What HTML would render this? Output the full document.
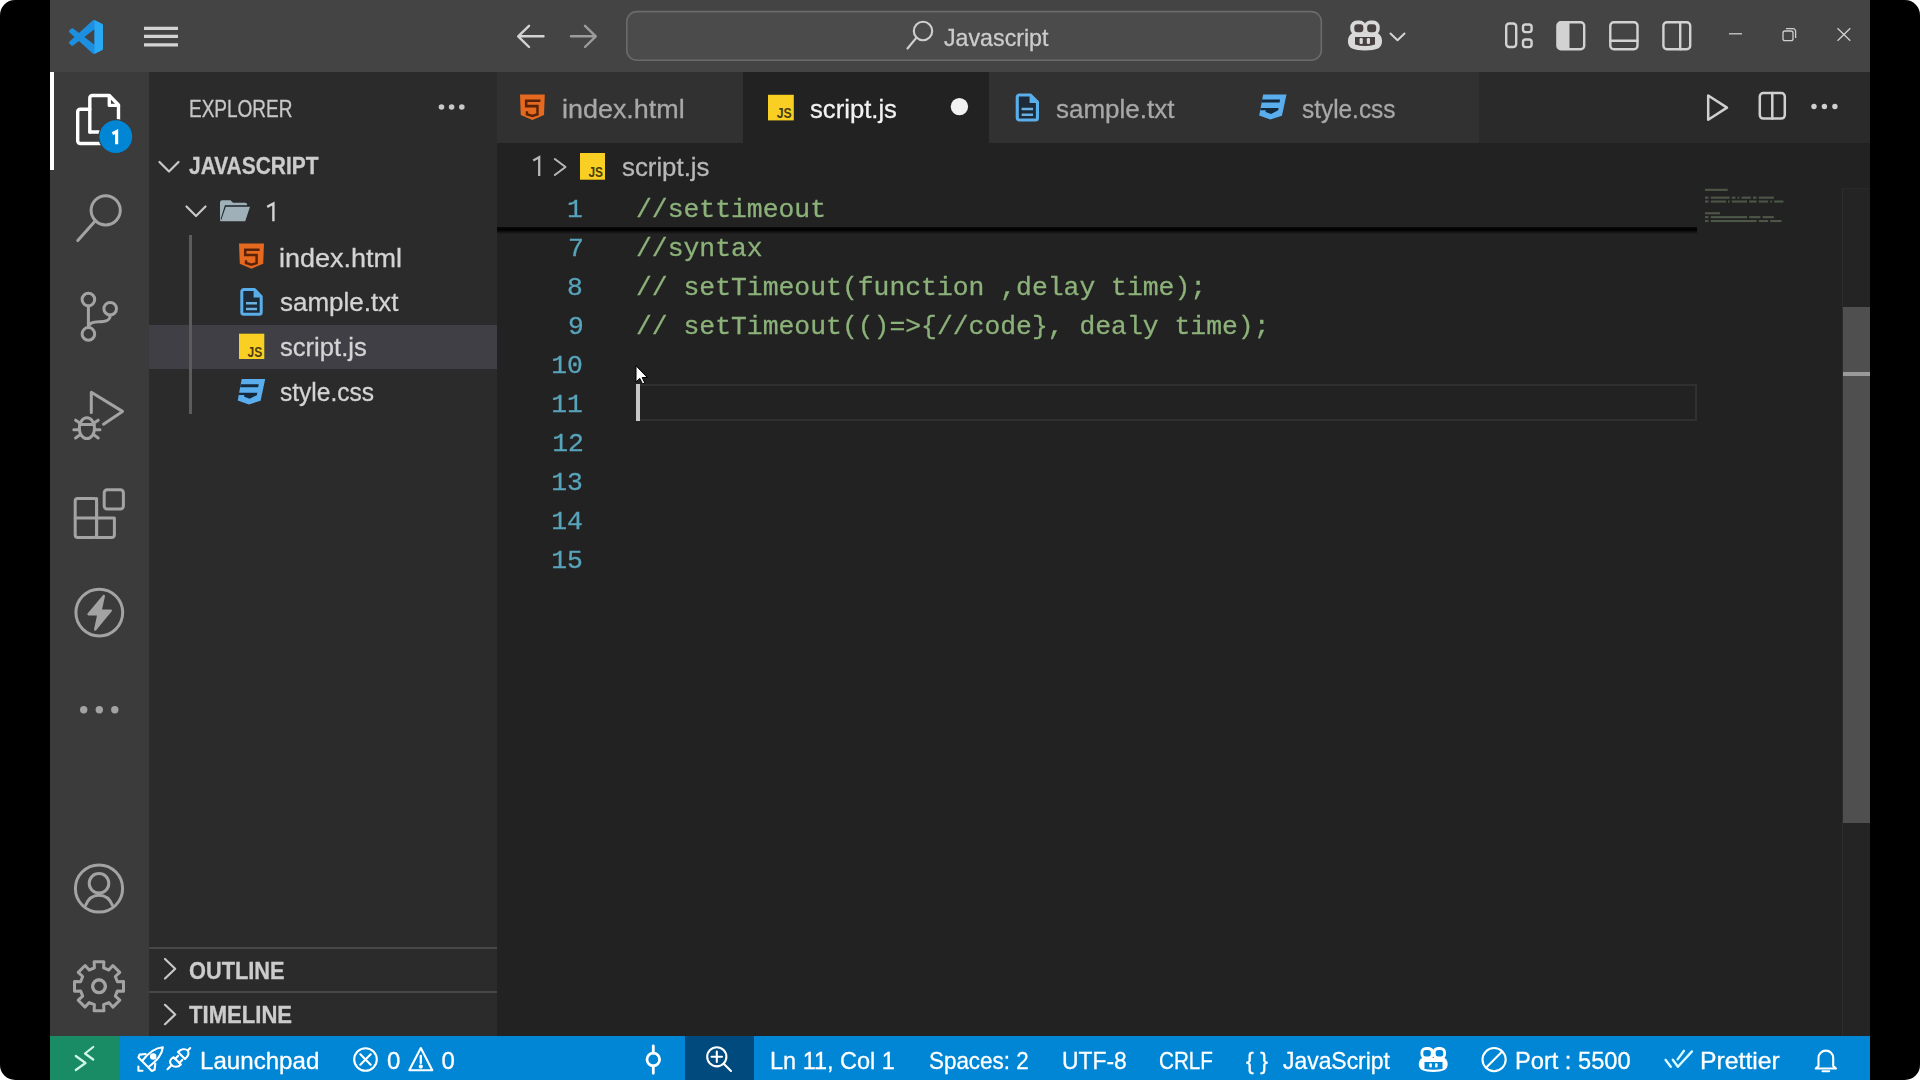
<!DOCTYPE html>
<html><head><meta charset="utf-8"><style>
html,body{margin:0;padding:0;width:1920px;height:1080px;overflow:hidden;background:#fff}
.frame{position:absolute;left:0;top:0;width:1920px;height:1080px;background:#000;border-radius:15px}
.r{position:absolute}
.t{position:absolute;white-space:pre;transform-origin:0 0;-webkit-text-stroke:0.3px currentColor;-webkit-font-smoothing:antialiased}
svg{position:absolute;left:0;top:0}
</style></head><body>
<div class="frame"></div>
<div class="r" style="left:50px;top:0px;width:1820px;height:72px;background:#444444;"></div>
<div class="r" style="left:50px;top:72px;width:99px;height:964px;background:#3b3b3b;"></div>
<div class="r" style="left:149px;top:72px;width:348px;height:964px;background:#2b2b2b;"></div>
<div class="r" style="left:497px;top:72px;width:1373px;height:71px;background:#2a2a2a;"></div>
<div class="r" style="left:497px;top:143px;width:1373px;height:893px;background:#222222;"></div>
<div class="r" style="left:50px;top:1036px;width:1820px;height:44px;background:#0086d5;"></div>
<div class="r" style="left:50px;top:1036px;width:70px;height:44px;background:#1a8c65;"></div>
<div class="r" style="left:684.5px;top:1036px;width:69.0px;height:44px;background:#004a7d;"></div>
<div class="r" style="left:497px;top:72px;width:246px;height:71px;background:#313131;"></div>
<div class="r" style="left:743px;top:72px;width:246px;height:71px;background:#222222;"></div>
<div class="r" style="left:989px;top:72px;width:244px;height:71px;background:#313131;"></div>
<div class="r" style="left:1233px;top:72px;width:246px;height:71px;background:#313131;"></div>
<div class="r" style="left:50px;top:72px;width:4px;height:98px;background:#ffffff;"></div>
<div class="r" style="left:149px;top:324.5px;width:348px;height:44.5px;background:#3f3f45;"></div>
<div class="r" style="left:189.3px;top:234.5px;width:2.5px;height:179.5px;background:#5c5c5c;"></div>
<div class="r" style="left:149px;top:946.5px;width:348px;height:2.0px;background:#474747;"></div>
<div class="r" style="left:149px;top:991px;width:348px;height:2px;background:#474747;"></div>
<div class="r" style="left:636px;top:384px;width:1061px;height:37px;background:transparent;box-sizing:border-box;border:2px solid #303030;"></div>
<div class="r" style="left:635.5px;top:384px;width:4.0px;height:37px;background:#c8c8c8;"></div>
<div class="r" style="left:497px;top:226.5px;width:1200px;height:7.5px;background:transparent;background:linear-gradient(#0a0a0a,#000 35%,rgba(0,0,0,0.5) 70%,rgba(0,0,0,0))"></div>
<div class="r" style="left:1842px;top:188px;width:28px;height:848px;background:#242424;box-sizing:border-box;border-left:1px solid #2d2d2d;border-top:1px solid #282828"></div>
<div class="r" style="left:1843px;top:306.5px;width:27px;height:516.0px;background:#4f4f4f;"></div>
<div class="r" style="left:1843px;top:372px;width:27px;height:4px;background:#9a9a9a;"></div>
<svg width="1920" height="1080" viewBox="0 0 1920 1080" fill="none" stroke-linecap="round" stroke-linejoin="round">
<!-- VS Code logo -->
<g transform="translate(69,20) scale(0.34)">
<path fill="#1c8fe0" d="M96.46 10.8L75.86.87a6.23 6.23 0 0 0-7.1 1.2L29.35 38.04 12.19 25.01a4.16 4.16 0 0 0-5.32.24l-5.5 5a4.17 4.17 0 0 0 0 6.16L16.26 50 1.37 63.58a4.17 4.17 0 0 0 0 6.16l5.5 5a4.16 4.16 0 0 0 5.32.24l17.16-13.03 39.41 35.96a6.22 6.22 0 0 0 7.1 1.2l20.6-9.92A6.25 6.25 0 0 0 100 83.58V16.42a6.25 6.25 0 0 0-3.54-5.63zM75 72.7L45.1 50 75 27.3z"/>
<path fill="#2aa8f2" d="M75 27.3V72.7 L75 99 l21.46-10.3A6.25 6.25 0 0 0 100 83.58V16.42a6.25 6.25 0 0 0-3.54-5.63L75.86.87 75 1z"/>
</g>
<!-- hamburger -->
<g stroke="#d4d4d4" stroke-width="3.2" stroke-linecap="butt">
<path d="M144 28.3H178M144 36.4H178M144 44.8H178"/>
</g>
<!-- nav arrows -->
<path d="M543.5 36.3H518.5M529 25.8L518.2 36.3L529 47" stroke="#d4d4d4" stroke-width="2.4"/>
<path d="M571 36.3H595.5M585 25.8L595.8 36.3L585 47" stroke="#9c9c9c" stroke-width="2.4"/>
<!-- search box -->
<rect x="626.8" y="11.6" width="694.5" height="48.6" rx="10" fill="#4b4b4b" stroke="#6b6b6b" stroke-width="1.6"/>
<circle cx="923" cy="31" r="9.2" stroke="#cfcfcf" stroke-width="2.1"/>
<path d="M916.5 37.6L907.5 48.5" stroke="#cfcfcf" stroke-width="2.2"/>
<!-- copilot -->
<g fill="#d9d9d9">
<path d="M1352.5 33 C1346.5 36 1346.5 46 1352 48.5 C1357 51 1373 51 1378 48.5 C1383.5 46 1383.5 36 1377.5 33 Z"/>
<rect x="1350.3" y="20.6" width="15.8" height="15" rx="6.5"/>
<rect x="1363.9" y="20.6" width="15.8" height="15" rx="6.5"/>
</g>
<g fill="#474040">
<rect x="1354.3" y="24.3" width="9" height="8" rx="3"/>
<rect x="1367.2" y="24.3" width="9" height="8" rx="3"/>
<path d="M1355 37 H1375 V44.5 Q1365 47.5 1355 44.5 Z"/>
</g>
<g fill="#d9d9d9"><rect x="1359.6" y="38" width="3.2" height="6" rx="1.3"/><rect x="1366.8" y="38" width="3.2" height="6" rx="1.3"/></g>
<path d="M1390.5 33.5L1397.5 40.2L1404.5 33.5" stroke="#d4d4d4" stroke-width="2"/>
<!-- layout icons -->
<g stroke="#d2d2d2" stroke-width="2.4">
<rect x="1506.2" y="23.5" width="10" height="23.5" rx="3"/>
<rect x="1523" y="24.5" width="8.6" height="7.6" rx="2.5"/>
<rect x="1523" y="39.5" width="8.6" height="7.6" rx="2.5"/>
<rect x="1557.4" y="22.3" width="26.8" height="26.9" rx="3.5"/>
<rect x="1610.3" y="22.3" width="27.2" height="26.9" rx="3.5"/>
<path d="M1610.3 40.7H1637.5"/>
<rect x="1663.4" y="22.3" width="26.8" height="26.9" rx="3.5"/>
<path d="M1680.2 22.3V49.2"/>
</g>
<path d="M1561 22.3 H1569.5 V49.2 H1561 A3.5 3.5 0 0 1 1557.4 45.7 V25.8 A3.5 3.5 0 0 1 1561 22.3Z" fill="#d2d2d2"/>
<!-- window controls -->
<g stroke="#cfcfcf" stroke-width="1.3" stroke-linecap="butt">
<path d="M1729 33.8H1742"/>
<rect x="1783" y="31" width="10" height="9.7" rx="2"/>
<path d="M1786 28.6H1793A2.6 2.6 0 0 1 1795.6 31.2V38"/>
<path d="M1837.5 28.3L1850.3 40.8M1850.3 28.3L1837.5 40.8"/>
</g>
<!-- activity bar -->
<g stroke="#ffffff" stroke-width="3.4">
<path d="M89.8 132 V98 A2.5 2.5 0 0 1 92.3 95.5 H109.3 L118.5 105 V120"/>
<path d="M109.3 95.8 V105.4 H118.5"/>
<path d="M89.8 109.3 H80.2 A2.5 2.5 0 0 0 77.7 111.8 V141 A2.5 2.5 0 0 0 80.2 143.5 H101"/>
<path d="M89.8 132 H100"/>
</g>
<circle cx="115.8" cy="136.6" r="17.5" fill="#3b3b3b"/><circle cx="115.8" cy="136.6" r="16.4" fill="#0086d5"/>
<path d="M112.4 133.6 L116.6 131.6 V144.2" stroke="#ffffff" stroke-width="3.2" stroke-linecap="butt" stroke-linejoin="miter"/>
<g stroke="#a3a3a3" stroke-width="3">
<circle cx="105.7" cy="210.3" r="14.6"/>
<path d="M95.4 220.7 L77.8 240.6"/>
<circle cx="88.4" cy="299.6" r="6.3"/>
<circle cx="88.4" cy="333.9" r="6.3"/>
<circle cx="110.2" cy="308.7" r="6.3"/>
<path d="M88.4 305.9 V327.6"/>
<path d="M110.2 315 C110.2 320.5 106 321.8 99 321.8 C93 321.8 89 323.5 88.4 327"/>
<path d="M91.3 412.5 V392.2 L122.5 411.4 L103.5 424.2"/>
<ellipse cx="86.9" cy="428.2" rx="7.6" ry="10.4"/>
<path d="M79.6 424.4 H94.2 M75.6 420.2 L80.2 423.2 M73.8 429.8 H79.3 M75.6 438 L80.2 434.6 M98.2 420.2 L93.6 423.2 M100 429.8 H94.5 M98.2 438 L93.6 434.6"/>
<rect x="75.2" y="498.4" width="21.4" height="39" rx="2.5"/>
<path d="M75.2 518 H114.4 V534.9 A2.5 2.5 0 0 1 111.9 537.4 H96.6 V498.4"/>
<rect x="104.2" y="489.8" width="19.2" height="19.2" rx="3"/>
<circle cx="99.3" cy="612.6" r="23.4"/>
<circle cx="99" cy="888.5" r="23.6"/>
<circle cx="99" cy="883.3" r="9.8"/>
<path d="M85.5 905.5 C88.5 898 93.5 895.3 99 895.3 C104.5 895.3 109.5 898 112.5 905.5"/>
</g>
<path fill="#a3a3a3" stroke="#a3a3a3" stroke-width="2.4" stroke-linejoin="round" d="M103.8 596 L88.5 614.2 H98.5 L95.2 629.5 L110.8 610.6 H100.6 Z"/>
<g fill="#a3a3a3"><circle cx="83.7" cy="709.8" r="3.7"/><circle cx="99.3" cy="709.8" r="3.7"/><circle cx="114.8" cy="709.8" r="3.7"/></g>
<g transform="translate(99,986.3)" stroke="#a3a3a3" stroke-width="3">
<path id="gear" d=""/>
<circle r="6.5"/>
</g>
<!-- sidebar -->
<g fill="#c8c8c8"><circle cx="441.5" cy="107" r="2.8"/><circle cx="451.6" cy="107" r="2.8"/><circle cx="461.8" cy="107" r="2.8"/></g>
<g stroke="#c8c8c8" stroke-width="2.2">
<path d="M159.5 162 L169 171.5 L178.5 162"/>
<path d="M186.5 206.5 L196 216 L205.5 206.5"/>
<path d="M165 959 L175.2 968.7 L165 978.5"/>
<path d="M165 1004.8 L175.2 1014.5 L165 1024.2"/>
</g>
<path fill="#9fb0b9" d="M220 221 V202.5 Q220 200.2 222.3 200.2 H230.5 L233 202.8 H245 Q247.2 202.8 247.2 205 V206.2 H225.5 L221.2 221 Z"/>
<path fill="#1e2629" d="M224.9 205.2 H249.8 L249.4 206.9 H226 L221.9 220.5 L220.6 219.2 Z"/>
<path fill="#9fb0b9" d="M225.8 206.8 H250 L245.2 221.3 H220.8 Z"/>
<path d="M533.2 160.6 L539.2 157.3 V176" stroke="#b8b8b8" stroke-width="2.3" stroke-linecap="butt" stroke-linejoin="miter"/>
<path d="M267.2 206.9 L273.4 203.5 V221.3" stroke="#d4d4d4" stroke-width="2.4" stroke-linecap="butt" stroke-linejoin="miter"/>
<!-- editor actions -->
<g stroke="#d0d0d0" stroke-width="2.5">
<path d="M1708.2 95.5 V119.8 L1727 107.6 Z"/>
<rect x="1759.8" y="93" width="25" height="25.6" rx="3.5"/>
<path d="M1772.3 93 V118.6"/>
<path d="M554.8 159 L565.5 167 L554.8 175" stroke="#b8b8b8" stroke-width="2"/>
</g>
<g fill="#d0d0d0"><circle cx="1814" cy="106.5" r="2.7"/><circle cx="1824.4" cy="106.5" r="2.7"/><circle cx="1834.9" cy="106.5" r="2.7"/></g>
<circle cx="959.4" cy="106.6" r="8.7" fill="#f2f2f2"/>
<g transform="translate(520,94) scale(0.9920,1.0196)">
<path fill="#e56a1f" d="M0 0.5 H25 L24.2 20.5 L12.5 25.5 L0.8 20.5 Z"/>
<path d="M20.6 6.6 H6.2 V11.9 H17.6 V19.9 L12.5 21.5 L7 19.9 V17" stroke="#5a2309" stroke-width="2.5" fill="none" stroke-linejoin="miter" stroke-linecap="butt"/>
</g>
<g transform="translate(768,94.8) scale(1.0198,1.0119)">
<rect width="25.3" height="25.3" fill="#f9cf24"/>
<text x="23.2" y="23" text-anchor="end" font-family="Liberation Sans" font-weight="700" font-size="14" fill="#4a3d0c" textLength="14.7" lengthAdjust="spacingAndGlyphs">JS</text>
</g>
<g transform="translate(1015.7,93.5) scale(1.0402,1.0108)">
<path d="M1.5 3.5 A2 2 0 0 1 3.5 1.5 H14.2 L20.9 8.5 V24.2 A2 2 0 0 1 18.9 26.2 H3.5 A2 2 0 0 1 1.5 24.2 Z" stroke="#5aaeea" stroke-width="3" fill="#1d2a37"/>
<path d="M13.3 2 V9.5 H20.5 Z" fill="#5aaeea"/>
<path d="M5.7 15.3 H16.7 M5.7 21 H16.7" stroke="#6ab0e0" stroke-width="2.6" fill="none" stroke-linecap="butt"/>
</g>
<g transform="translate(1258.8,94) scale(0.9929,0.9848)">
<path fill="#5aaeed" d="M4.4 0.4 H27.9 L23.3 22.2 L11.6 25.8 L0.4 21.8 Z"/>
<path fill="#15293c" d="M3.4 5.7 H21.4 L20.9 8.7 H2.85 Z"/>
<path fill="#15293c" d="M1.84 14.1 H20 L19.5 16.6 L12.4 20.2 L7 18.2 L6.8 16.4 H1.42 Z"/>
</g>
<g transform="translate(580,153) scale(0.9881,1.0553)">
<rect width="25.3" height="25.3" fill="#f9cf24"/>
<text x="23.2" y="23" text-anchor="end" font-family="Liberation Sans" font-weight="700" font-size="14" fill="#4a3d0c" textLength="14.7" lengthAdjust="spacingAndGlyphs">JS</text>
</g>
<g transform="translate(239,243) scale(1.0000,1.0078)">
<path fill="#e56a1f" d="M0 0.5 H25 L24.2 20.5 L12.5 25.5 L0.8 20.5 Z"/>
<path d="M20.6 6.6 H6.2 V11.9 H17.6 V19.9 L12.5 21.5 L7 19.9 V17" stroke="#5a2309" stroke-width="2.5" fill="none" stroke-linejoin="miter" stroke-linecap="butt"/>
</g>
<g transform="translate(240.3,288) scale(1.0000,1.0000)">
<path d="M1.5 3.5 A2 2 0 0 1 3.5 1.5 H14.2 L20.9 8.5 V24.2 A2 2 0 0 1 18.9 26.2 H3.5 A2 2 0 0 1 1.5 24.2 Z" stroke="#5aaeea" stroke-width="3" fill="#1d2a37"/>
<path d="M13.3 2 V9.5 H20.5 Z" fill="#5aaeea"/>
<path d="M5.7 15.3 H16.7 M5.7 21 H16.7" stroke="#6ab0e0" stroke-width="2.6" fill="none" stroke-linecap="butt"/>
</g>
<g transform="translate(239,333.7) scale(1.0000,1.0000)">
<rect width="25.3" height="25.3" fill="#f9cf24"/>
<text x="23.2" y="23" text-anchor="end" font-family="Liberation Sans" font-weight="700" font-size="14" fill="#4a3d0c" textLength="14.7" lengthAdjust="spacingAndGlyphs">JS</text>
</g>
<g transform="translate(237.3,378.6) scale(1.0000,1.0000)">
<path fill="#5aaeed" d="M4.4 0.4 H27.9 L23.3 22.2 L11.6 25.8 L0.4 21.8 Z"/>
<path fill="#15293c" d="M3.4 5.7 H21.4 L20.9 8.7 H2.85 Z"/>
<path fill="#15293c" d="M1.84 14.1 H20 L19.5 16.6 L12.4 20.2 L7 18.2 L6.8 16.4 H1.42 Z"/>
</g>
<path d="M94.4 967.9 L94.1 961.8 L103.9 961.8 L103.6 967.9 L108.8 970.0 L112.9 965.5 L119.8 972.4 L115.3 976.5 L117.4 981.7 L123.5 981.4 L123.5 991.2 L117.4 990.9 L115.3 996.1 L119.8 1000.2 L112.9 1007.1 L108.8 1002.6 L103.6 1004.7 L103.9 1010.8 L94.1 1010.8 L94.4 1004.7 L89.2 1002.6 L85.1 1007.1 L78.2 1000.2 L82.7 996.1 L80.6 990.9 L74.5 991.2 L74.5 981.4 L80.6 981.7 L82.7 976.5 L78.2 972.4 L85.1 965.5 L89.2 970.0Z" stroke="#a3a3a3" stroke-width="3" fill="none" stroke-linejoin="round"/><circle cx="99" cy="986.3" r="6.3" stroke="#a3a3a3" stroke-width="3" fill="none"/>
<g stroke="#ffffff" stroke-width="2.1" fill="none" stroke-linecap="round" stroke-linejoin="round">
<path d="M75.8 1056 L85.5 1063 L75.8 1070" stroke="#d2f7ea" stroke-width="2.2"/>
<path d="M93.2 1047 L85 1053.5 L93.2 1059.5" stroke="#d2f7ea" stroke-width="2.2"/>
<path d="M162.8 1047.3 C155 1047.8 149 1052 142 1061.1 L148.2 1067.3 C157 1060.3 162 1055 162.8 1047.3 Z"/>
<path d="M142 1061.1 L138.4 1057.4 L139.6 1054.6 L145.6 1054 M148.2 1067.3 L151.8 1070.9 L154.6 1069.8 L155.3 1063.7"/>
<path d="M138.4 1066.6 V1070.7 H142.5"/>
<circle cx="153.2" cy="1056.4" r="2.2" fill="#ffffff"/>
<path d="M173.6 1057.2 L180.9 1064.5 C178 1067.5 174 1067.5 171.5 1065 C169 1062.5 169.5 1059.5 173.6 1057.2 Z"/>
<path d="M171 1065.8 L167.5 1069.3 M175.2 1058.8 L178.2 1055.8 M179.3 1062.9 L182.3 1059.9"/>
<path d="M178 1052 L185 1059 C188 1056.5 189.5 1053.5 187.8 1050.5 C185 1048.3 181 1049 178 1052 Z"/>
<path d="M187.8 1050.5 L190.2 1048"/>
<circle cx="365.5" cy="1059.5" r="11.3"/>
<path d="M360.3 1054.3 L370.7 1064.7 M370.7 1054.3 L360.3 1064.7"/>
<path d="M420.8 1048 L432.3 1070.3 H409.3 Z"/>
<path d="M420.8 1056 V1063" stroke-width="2.3"/>
<circle cx="420.8" cy="1066.6" r="1.1" fill="#ffffff"/>
<circle cx="653.3" cy="1059.5" r="6.3" stroke-width="2.8"/>
<path d="M653.3 1046 V1053 M653.3 1066 V1073.3" stroke-width="2.8"/>
<circle cx="716.8" cy="1056.8" r="9.6"/>
<path d="M723.7 1063.7 L731 1071 M716.8 1051.5 V1062 M711.5 1056.8 H722" />
<circle cx="1494.1" cy="1059.6" r="11.6"/>
<path d="M1486 1067.7 L1502.2 1051.5"/>
<path d="M1665.5 1059.8 L1670.8 1066.8 M1672.8 1059.8 L1677.9 1066.8 L1692 1051.4 M1677.6 1059.4 L1684 1050.8" stroke="#d8fbff" stroke-width="2.3"/>
<path d="M1818.5 1066 V1058 A7.3 7.3 0 0 1 1833.2 1058 V1066 L1836 1068.5 H1815.7 Z"/>
<path d="M1822.5 1071.3 H1829.2"/>
</g>
<g fill="#ffffff">
<path d="M1422 1058 C1417.5 1061 1418 1068 1422 1070 C1427 1072.5 1439.5 1072.5 1444.5 1070 C1448.5 1068 1449 1061 1444.5 1058 Z"/>
<rect x="1420.5" y="1047" width="13.5" height="12.5" rx="5.5"/>
<rect x="1432.5" y="1047" width="13.5" height="12.5" rx="5.5"/>
</g>
<g fill="#0086d5">
<rect x="1423.3" y="1050" width="7.5" height="6.5" rx="2.5"/>
<rect x="1435.7" y="1050" width="7.5" height="6.5" rx="2.5"/>
<path d="M1424.5 1062 H1442.5 V1069 Q1433.5 1070.5 1424.5 1069 Z"/>
</g>
<g fill="#ffffff"><rect x="1429.3" y="1063.3" width="2.6" height="4.3" rx="1"/><rect x="1435" y="1063.3" width="2.6" height="4.3" rx="1"/></g>

<path d="M636 366 V382 L639.8 378.4 L642.5 384 L644.8 383 L642.2 377.5 L647 377.5 Z" fill="#ffffff" stroke="#000000" stroke-width="1"/>
<g fill="#8aa07c" opacity="0.42">
<rect x="1705.0" y="188.8" width="22.7" height="2.1"/>
<rect x="1705.0" y="196.6" width="3.5" height="2.1"/>
<rect x="1710.8" y="196.6" width="18.9" height="2.1"/>
<rect x="1731.9" y="196.6" width="3.5" height="2.1"/>
<rect x="1737.6" y="196.6" width="1.6" height="2.1"/>
<rect x="1741.5" y="196.6" width="9.3" height="2.1"/>
<rect x="1753.0" y="196.6" width="3.5" height="2.1"/>
<rect x="1758.8" y="196.6" width="15.1" height="2.1"/>
<rect x="1705.0" y="200.5" width="3.5" height="2.1"/>
<rect x="1710.8" y="200.5" width="15.1" height="2.1"/>
<rect x="1728.0" y="200.5" width="1.6" height="2.1"/>
<rect x="1731.9" y="200.5" width="15.1" height="2.1"/>
<rect x="1749.2" y="200.5" width="7.4" height="2.1"/>
<rect x="1758.8" y="200.5" width="9.3" height="2.1"/>
<rect x="1770.3" y="200.5" width="1.6" height="2.1"/>
<rect x="1774.1" y="200.5" width="9.3" height="2.1"/>
<rect x="1705.0" y="212.2" width="15.1" height="2.1"/>
<rect x="1705.0" y="216.1" width="3.5" height="2.1"/>
<rect x="1710.8" y="216.1" width="36.2" height="2.1"/>
<rect x="1749.2" y="216.1" width="11.2" height="2.1"/>
<rect x="1762.6" y="216.1" width="11.2" height="2.1"/>
<rect x="1705.0" y="220.0" width="3.5" height="2.1"/>
<rect x="1710.8" y="220.0" width="45.8" height="2.1"/>
<rect x="1758.8" y="220.0" width="9.3" height="2.1"/>
<rect x="1770.3" y="220.0" width="11.2" height="2.1"/>
</g>
</svg>

<div style="position:absolute;left:0;top:0;width:1920px;height:1080px;will-change:transform">
<span class="t" style="left:944.2px;top:25.5px;font:400 24px/24px 'Liberation Sans',sans-serif;color:#cccccc;transform:scaleX(0.9671);">Javascript</span>
<span class="t" style="left:562.0px;top:96.1px;font:400 26.5px/26.5px 'Liberation Sans',sans-serif;color:#a8a8a8;transform:scaleX(1.0161);">index.html</span>
<span class="t" style="left:809.7px;top:95.8px;font:400 26.5px/26.5px 'Liberation Sans',sans-serif;color:#f2f2f2;transform:scaleX(0.9680);">script.js</span>
<span class="t" style="left:1055.7px;top:95.8px;font:400 26.5px/26.5px 'Liberation Sans',sans-serif;color:#a8a8a8;transform:scaleX(0.9810);">sample.txt</span>
<span class="t" style="left:1301.8px;top:95.8px;font:400 26.5px/26.5px 'Liberation Sans',sans-serif;color:#a8a8a8;transform:scaleX(0.9196);">style.css</span>
<span class="t" style="left:621.7px;top:153.6px;font:400 26.5px/26.5px 'Liberation Sans',sans-serif;color:#b8b8b8;transform:scaleX(0.9736);">script.js</span>
<span class="t" style="left:189.1px;top:97.9px;font:400 23px/23px 'Liberation Sans',sans-serif;color:#c8c8c8;transform:scaleX(0.8257);">EXPLORER</span>
<span class="t" style="left:189.0px;top:155.3px;font:700 23px/23px 'Liberation Sans',sans-serif;color:#cccccc;transform:scaleX(0.9098);">JAVASCRIPT</span>
<span class="t" style="left:279.2px;top:245.0px;font:400 26.5px/26.5px 'Liberation Sans',sans-serif;color:#d4d4d4;transform:scaleX(1.0194);">index.html</span>
<span class="t" style="left:280.2px;top:288.6px;font:400 26.5px/26.5px 'Liberation Sans',sans-serif;color:#d4d4d4;transform:scaleX(0.9802);">sample.txt</span>
<span class="t" style="left:280.2px;top:334.3px;font:400 26.5px/26.5px 'Liberation Sans',sans-serif;color:#d4d4d4;transform:scaleX(0.9658);">script.js</span>
<span class="t" style="left:280.2px;top:378.9px;font:400 26.5px/26.5px 'Liberation Sans',sans-serif;color:#d4d4d4;transform:scaleX(0.9255);">style.css</span>
<span class="t" style="left:189.2px;top:959.6px;font:700 23px/23px 'Liberation Sans',sans-serif;color:#cccccc;transform:scaleX(0.9468);">OUTLINE</span>
<span class="t" style="left:189.2px;top:1003.9px;font:700 23px/23px 'Liberation Sans',sans-serif;color:#cccccc;transform:scaleX(0.9604);">TIMELINE</span>
<span class="t" style="left:200.0px;top:1049.1px;font:400 24px/24px 'Liberation Sans',sans-serif;color:#ffffff;transform:scaleX(1.0049);">Launchpad</span>
<span class="t" style="left:387.0px;top:1049.1px;font:400 24px/24px 'Liberation Sans',sans-serif;color:#ffffff;">0</span>
<span class="t" style="left:441.6px;top:1049.1px;font:400 24px/24px 'Liberation Sans',sans-serif;color:#ffffff;">0</span>
<span class="t" style="left:770.0px;top:1049.1px;font:400 24px/24px 'Liberation Sans',sans-serif;color:#ffffff;transform:scaleX(0.9787);">Ln 11, Col 1</span>
<span class="t" style="left:928.7px;top:1049.1px;font:400 24px/24px 'Liberation Sans',sans-serif;color:#ffffff;transform:scaleX(0.9337);">Spaces: 2</span>
<span class="t" style="left:1062.0px;top:1049.1px;font:400 24px/24px 'Liberation Sans',sans-serif;color:#ffffff;transform:scaleX(0.9513);">UTF-8</span>
<span class="t" style="left:1159.4px;top:1049.1px;font:400 24px/24px 'Liberation Sans',sans-serif;color:#ffffff;transform:scaleX(0.8605);">CRLF</span>
<span class="t" style="left:1245.6px;top:1049.1px;font:400 24px/24px 'Liberation Sans',sans-serif;color:#ffffff;transform:scaleX(0.9655);">{ }</span>
<span class="t" style="left:1282.8px;top:1049.1px;font:400 24px/24px 'Liberation Sans',sans-serif;color:#ffffff;transform:scaleX(0.9539);">JavaScript</span>
<span class="t" style="left:1515.4px;top:1049.1px;font:400 24px/24px 'Liberation Sans',sans-serif;color:#ffffff;transform:scaleX(0.9840);">Port : 5500</span>
<span class="t" style="left:1699.6px;top:1049.1px;font:400 24px/24px 'Liberation Sans',sans-serif;color:#ffffff;transform:scaleX(1.0319);">Prettier</span>
<span class="t" style="left:567.0px;top:196.8px;font:400 26.4px/26.4px 'Liberation Mono',monospace;color:#58a4bb;">1</span>
<span class="t" style="left:568.0px;top:235.8px;font:400 26.4px/26.4px 'Liberation Mono',monospace;color:#58a4bb;">7</span>
<span class="t" style="left:567.0px;top:274.8px;font:400 26.4px/26.4px 'Liberation Mono',monospace;color:#58a4bb;">8</span>
<span class="t" style="left:568.0px;top:313.8px;font:400 26.4px/26.4px 'Liberation Mono',monospace;color:#58a4bb;">9</span>
<span class="t" style="left:551.2px;top:352.8px;font:400 26.4px/26.4px 'Liberation Mono',monospace;color:#58a4bb;">10</span>
<span class="t" style="left:551.2px;top:391.8px;font:400 26.4px/26.4px 'Liberation Mono',monospace;color:#58a4bb;">11</span>
<span class="t" style="left:552.2px;top:430.8px;font:400 26.4px/26.4px 'Liberation Mono',monospace;color:#58a4bb;">12</span>
<span class="t" style="left:551.2px;top:469.8px;font:400 26.4px/26.4px 'Liberation Mono',monospace;color:#58a4bb;">13</span>
<span class="t" style="left:551.2px;top:508.8px;font:400 26.4px/26.4px 'Liberation Mono',monospace;color:#58a4bb;">14</span>
<span class="t" style="left:551.2px;top:547.8px;font:400 26.4px/26.4px 'Liberation Mono',monospace;color:#58a4bb;">15</span>
<span class="t" style="left:636px;top:196.8px;font:26.4px/26.4px 'Liberation Mono',monospace;color:#8cb27a">//settimeout</span>
<span class="t" style="left:636px;top:235.8px;font:26.4px/26.4px 'Liberation Mono',monospace;color:#8cb27a">//syntax</span>
<span class="t" style="left:636px;top:274.8px;font:26.4px/26.4px 'Liberation Mono',monospace;color:#8cb27a">// setTimeout(function ,delay time);</span>
<span class="t" style="left:636px;top:313.8px;font:26.4px/26.4px 'Liberation Mono',monospace;color:#8cb27a">// setTimeout(()=&gt;{//code}, dealy time);</span>
</div>
</body></html>
